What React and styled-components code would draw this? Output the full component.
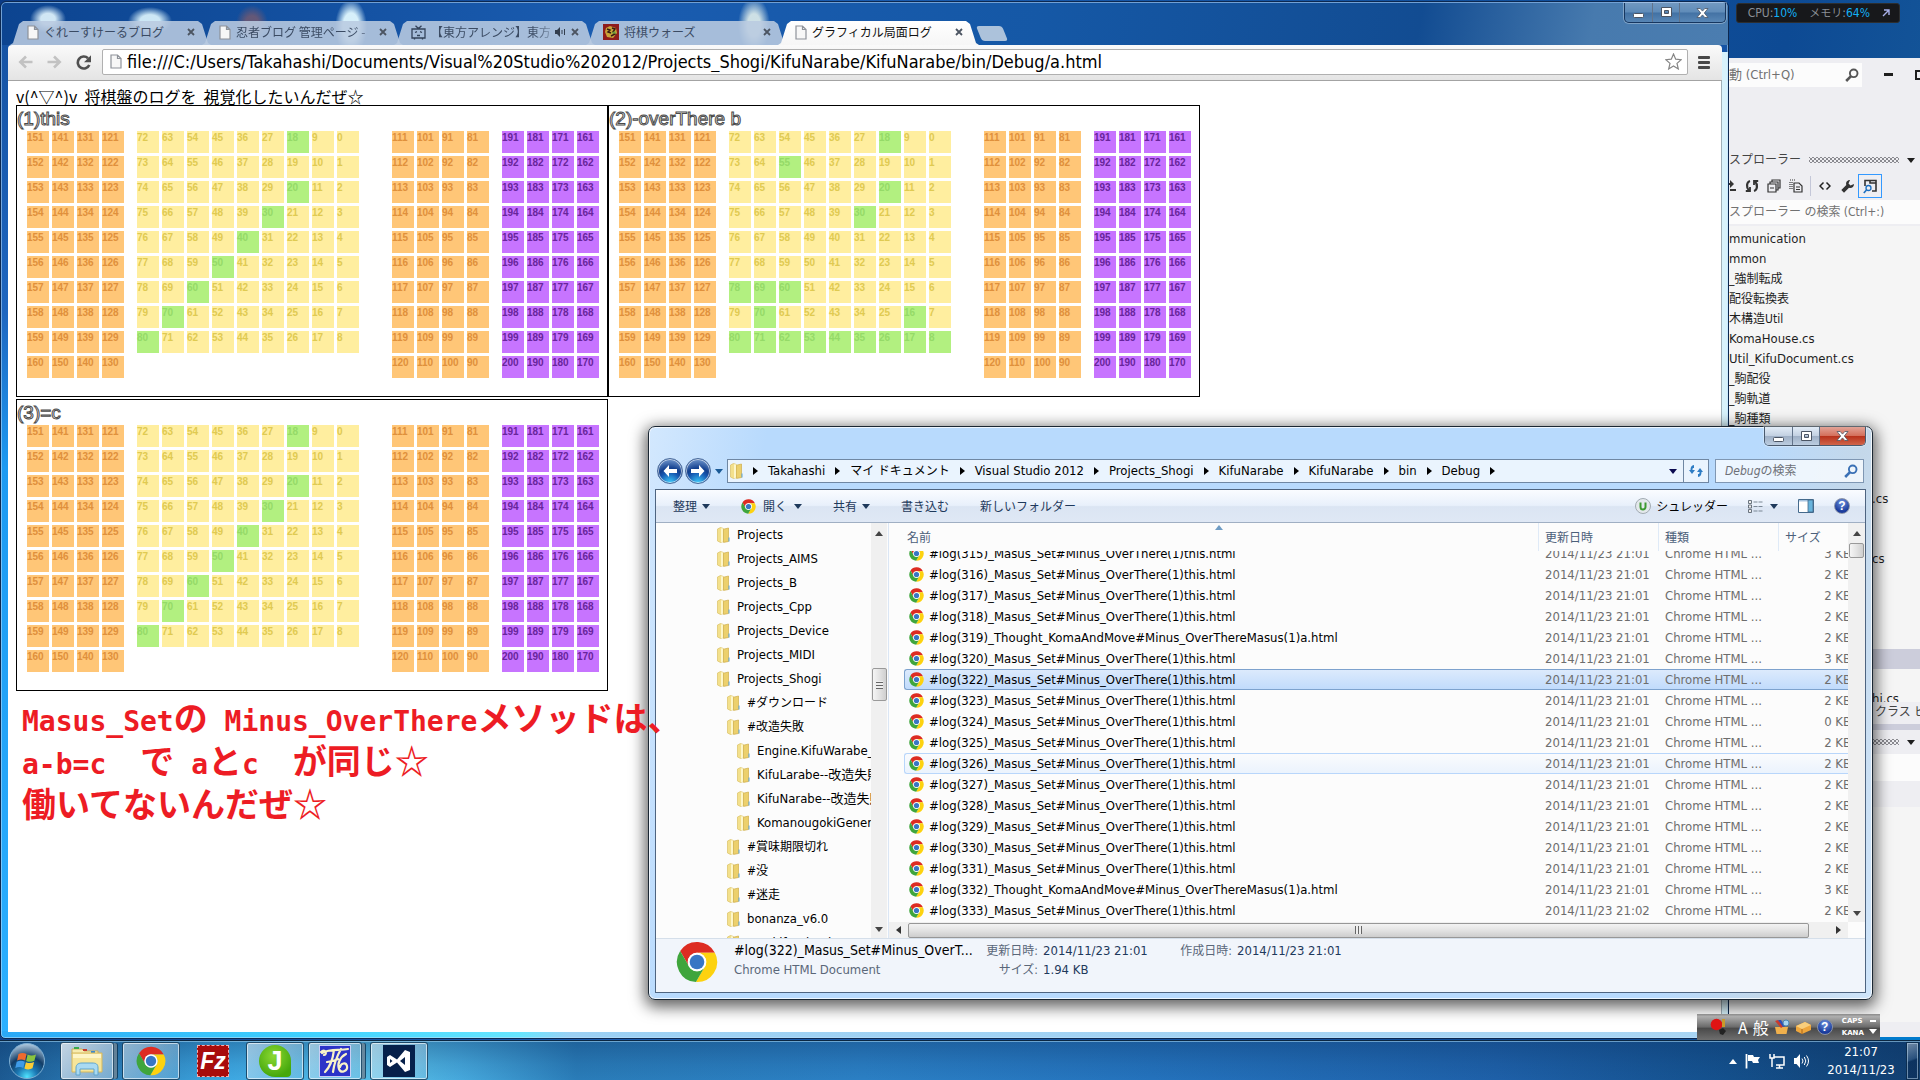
import React, { useEffect, useRef } from "react";
import styled, { createGlobalStyle, css } from "styled-components";

const ui = `"DejaVu Sans Condensed", "Noto Sans CJK JP", sans-serif`;
const jp = `"Noto Sans CJK JP", sans-serif`;

const Global = createGlobalStyle`
  * { box-sizing: border-box; }
  html, body, #root { height: 100%; }
  body { margin: 0; overflow: hidden; font-family: ${ui}; font-size: 13px; line-height: 20px; color: #000; }
  button { border: 0; padding: 0; margin: 0; background: none; font: inherit; color: inherit; }
  input { border: 0; padding: 0; margin: 0; background: none; font: inherit; color: inherit; min-width: 0; outline: 0; }
  svg { display: block; flex: none; }
`;

/* ---------- desktop ---------- */

const Desktop = styled.div`
  position: relative;
  height: 100vh;
  min-height: 720px;
  display: flex;
  flex-direction: column;
  justify-content: flex-end;
  overflow: hidden;
  background: linear-gradient(100deg, #0a3a85 0%, #1a5cb0 40%, #0d4a94 85%, #1a5f9c 100%);
`;

const Gadget = styled.div`
  position: absolute;
  top: 3px;
  right: 20px;
  display: flex;
  align-items: center;
  gap: 12px;
  height: 20px;
  padding: 0 9px 0 11px;
  border-radius: 3px;
  background: #17181b;
  border: 1px solid #2c2e30;
  color: #8a8f96;
  font-size: 12px;
  white-space: nowrap;
  b { color: #12b0f5; font-weight: 400; }
  small { font-size: 11px; }
`;

/* ---------- shared caption buttons ---------- */

const CaptionGroup = styled.div`
  display: flex;
  flex: none;
  align-self: flex-start;
  height: ${(p) => (p.$glass ? 19 : 20)}px;
  border: 1px solid ${(p) => (p.$glass ? "#4a5a6e" : "#16365f")};
  border-top: 0;
  border-radius: 0 0 5px 5px;
  overflow: hidden;
  box-shadow: 0 0 0 1px rgba(255, 255, 255, 0.3);
`;

const CaptionButton = styled.button`
  width: ${(p) => (p.$wide ? 46 : 27)}px;
  display: flex;
  align-items: center;
  justify-content: center;
  background: ${(p) =>
    p.$red
      ? "linear-gradient(#e2a397 0%, #d4705c 48%, #b8321c 52%, #d0654a 100%)"
      : p.$glass
      ? "linear-gradient(#e2ecf7 0%, #c3d1e2 48%, #9fb0c6 52%, #bccde0 100%)"
      : "linear-gradient(rgba(255,255,255,0.22) 0%, rgba(255,255,255,0.12) 48%, rgba(0,20,60,0.1) 52%, rgba(255,255,255,0.08) 100%)"};
  & + & { border-left: 1px solid ${(p) => (p.$glass ? "#62738a" : "#29507f")}; }
`;

function CaptionButtons({ glass }) {
  return (
    <CaptionGroup $glass={glass}>
      <CaptionButton $glass={glass} aria-label="最小化">
        <svg width="13" height="13" viewBox="0 0 13 13"><rect x="1.500" y="7.500" width="10" height="4" rx="1" fill="#fff" stroke="#4b5564" /></svg>
      </CaptionButton>
      <CaptionButton $glass={glass} aria-label="最大化">
        <svg width="13" height="13" viewBox="0 0 13 13"><path d="M1.500 1.500h10v9h-10zM4.500 4.500v3h4v-3z" fill="#fff" fillRule="evenodd" stroke="#4b5564" /></svg>
      </CaptionButton>
      <CaptionButton $glass={glass} $wide $red={glass} aria-label="閉じる">
        <svg width="13" height="12" viewBox="0 0 13 12"><path d="M1 1.500h3.200l2.300 2.600 2.300-2.600H12L8.300 6l3.700 4.500H8.800L6.500 7.900l-2.300 2.600H1L4.700 6z" fill="#fff" stroke="#4b5564" strokeWidth=".8" /></svg>
      </CaptionButton>
    </CaptionGroup>
  );
}

/* ---------- icons ---------- */

const Caret = styled.span`
  flex: none;
  width: 0;
  height: 0;
  border: 4px solid transparent;
  border-width: ${(p) => (p.$dir === "right" ? "4px 0 4px 5px" : p.$dir === "left" ? "4px 5px 4px 0" : p.$dir === "up" ? "0 4px 5px 4px" : "5px 4px 0 4px")};
  ${(p) => css`border-${p.$dir === "right" ? "left" : p.$dir === "left" ? "right" : p.$dir === "up" ? "bottom" : "top"}-color: ${p.$color || "#1e395b"};`}
`;

const ChromeIcon = ({ size = 16 }) => {
  const d = "M43.600 14H24A10 10 0 0 0 15.340 29L5.540 12.030A22 22 0 0 1 43.600 14Z";
  return (
    <svg width={size} height={size} viewBox="1 1 46 46">
      <path d={d} fill="#dd2c22" />
      <path d={d} fill="#fdd20f" transform="rotate(120 24 24)" />
      <path d={d} fill="#3fa53c" transform="rotate(240 24 24)" />
      <circle cx="24" cy="24" r="10.200" fill="#fff" />
      <circle cx="24" cy="24" r="8" fill="#3876c4" />
    </svg>
  );
};

const FolderIcon = () => (
  <svg width="13" height="16" viewBox="0 0 13 16">
    <path d="M0.500 2l3-1.500 3 1v13l-3 1-3-1.500z" fill="#f3e08c" stroke="#dbc266" strokeWidth=".7" />
    <path d="M4 1.200l2.500.3v13l-2.500.8z" fill="#fdf6c9" />
    <path d="M6.500 2.200l5-1.200v13.500l-5 .9z" fill="#ecd06c" stroke="#cfae4b" strokeWidth=".7" />
    <path d="M11.500 10.500h1v4h-1z" fill="#58a3d8" />
  </svg>
);

const PageIcon = () => (
  <svg width="12" height="15" viewBox="0 0 12 15">
    <path d="M1 1h6.500L11 4.500V14H1zM7.500 1v3.500H11" fill="#f7f7f7" stroke="#8e9299" strokeWidth="1.200" />
  </svg>
);

const TvIcon = () => (
  <svg width="15" height="15" viewBox="0 0 15 15" fill="none" stroke="#33435a" strokeWidth="1.300">
    <path d="M4.500.7l3 2.800 3-2.800M1 4h13v9H1zM3.500 13v1.500M11.500 13v1.500M4 7.500l2-.8M11 7.500l-2-.8M6 10.500h3" />
  </svg>
);

const GameIcon = () => (
  <svg width="16" height="16" viewBox="0 0 16 16">
    <rect width="16" height="16" fill="#8f1c1c" />
    <path d="M3 4l4-2 6 2 1 5-4 5-6-1-2-5z" fill="#caa53a" />
    <path d="M4 5l3 1-2 2 3 1M9 4l3 1-2 3 2 2-4 2" stroke="#3a1b12" strokeWidth="1.500" fill="none" />
    <path d="M8 9l4-2 1 3z" fill="#6a9c3a" />
  </svg>
);

const SearchIcon = ({ color }) => (
  <svg width="14" height="14" viewBox="0 0 14 14" fill="none" stroke={color}>
    <circle cx="8.700" cy="5.300" r="3.800" strokeWidth="1.900" />
    <path d="M6 8.200L1.200 13" strokeWidth="2.600" />
  </svg>
);

const HelpIcon = styled.span`
  flex: none;
  width: 16px;
  height: 16px;
  border-radius: 50%;
  background: radial-gradient(circle at 50% 25%, #6f93e0, #1b3c9c 70%);
  border: 1px solid #8a93a8;
  color: #fff;
  font: bold 12px/14px "Liberation Sans", sans-serif;
  text-align: center;
`;

/* ---------- Chrome window ---------- */

const BrowserWindow = styled.section`
  position: absolute;
  inset: 1px 191px 41px 0;
  display: flex;
  flex-direction: column;
  padding: 0 6px 6px 7px;
  border: 1px solid #0c2850;
  border-radius: 6px 6px 5px 5px;
  background:
    linear-gradient(90deg, transparent calc(100% - 7px), #d8f2fb calc(100% - 6px)) 0 50px / 100% 100% no-repeat,
    linear-gradient(90deg, #2aa8f6 0%, #3fd2ff 18%, #66e6ff 30%, #9bd0f4 33%, #a9d5f3 100%) 0 100% / 100% 7px no-repeat,
    linear-gradient(#1450a0 0%, #1e66c0 30%, #1d9af2 45%, #2cb0ff 100%);
  box-shadow: inset 0 0 0 1px rgba(190, 225, 255, 0.55);
`;

const TitleBar = styled.header`
  display: flex;
  align-items: flex-end;
  height: 42px;
  flex: none;
  margin: 1px -6px 0 -6px;
  padding: 0 2px 0 8px;
  border-radius: 5px 5px 0 0;
  background:
    radial-gradient(ellipse 18px 14px at 46px 16px, rgba(230, 248, 255, 0.9) 40%, transparent),
    radial-gradient(ellipse 22px 14px at 148px 18px, rgba(225, 248, 255, 0.9) 45%, transparent),
    radial-gradient(ellipse 16px 18px at 250px 20px, rgba(120, 90, 110, 0.8) 40%, transparent),
    radial-gradient(ellipse 16px 28px at 349px 24px, rgba(225, 248, 255, 0.95) 50%, transparent),
    radial-gradient(ellipse 16px 28px at 752px 22px, rgba(225, 238, 235, 0.9) 40%, transparent),
    linear-gradient(100deg, #0c4490 0%, #1a5cb0 35%, #1558a6 60%, #124c92 82%, #477aae 92%, #4b7db0 100%);
`;

const Tabs = styled.nav`
  display: flex;
  flex: 0 1 965px;
  min-width: 0;
`;

const Tab = styled.a`
  position: relative;
  flex: 0 1 201px;
  min-width: 0;
  height: 24px;
  margin-right: -9px;
  padding: 0 16px 2px 17px;
  display: flex;
  align-items: center;
  gap: 5px;
  font: 12px/20px ${jp};
  color: ${(p) => (p.$active ? "#111" : "#3b4b63")};
  text-decoration: none;
  white-space: nowrap;
  z-index: ${(p) => (p.$active ? 1 : 0)};
  &::before {
    content: "";
    position: absolute;
    inset: 0;
    z-index: -1;
    background: ${(p) => (p.$active ? "linear-gradient(#fff, #f6f6f6)" : "rgba(186, 203, 224, 0.88)")};
    clip-path: polygon(0 100%, 3px 92%, 9px 12%, 13px 0, calc(100% - 13px) 0, calc(100% - 9px) 12%, calc(100% - 3px) 92%, 100% 100%);
  }
`;

const TabTitle = styled.span`
  flex: 1;
  min-width: 0;
  overflow: hidden;
  ${(p) => p.$fade && css`mask-image: linear-gradient(90deg, #000 85%, rgba(0, 0, 0, 0.4));`}
`;

const NewTab = styled.button`
  width: 26px;
  height: 15px;
  margin: 0 0 4px 4px;
  background: rgba(186, 203, 224, 0.92);
  border-radius: 3px;
  transform: skewX(22deg);
`;

const CaptionSlot = styled.div`
  display: flex;
  align-self: flex-start;
  margin-left: auto;
`;

const BrowserToolbar = styled.div`
  display: flex;
  align-items: center;
  height: 36px;
  flex: none;
  padding: 0 12px 1px 10px;
  gap: 14px;
  border-radius: 4px 4px 0 0;
  border-bottom: 1px solid #a3a3a3;
  background: linear-gradient(#fafafa, #e4e4e4);
`;

const IconButton = styled.button`
  flex: none;
  display: flex;
`;

const Omnibox = styled.label`
  flex: 1;
  display: flex;
  align-items: center;
  gap: 5px;
  height: 26px;
  margin-left: -4px;
  margin-right: -4px;
  padding: 0 5px 1px 7px;
  background: #fff;
  border: 1px solid #b0b0b0;
  border-radius: 2px;
  input { flex: 1; font-size: 18px; height: 22px; }
`;

const Page = styled.main`
  flex: 1;
  min-height: 0;
  overflow: hidden;
  background: #fff;
  padding: 4px 8px;
  border-right: 1px solid #9fb0b8;
`;

const PageIntro = styled.p`
  margin: 0;
  height: 20px;
  font: 16px/22px ${jp};
  white-space: pre;
`;

const BoardList = styled.div`
  display: flex;
  flex-wrap: wrap;
  row-gap: 2px;
`;

const Board = styled.section`
  width: 592px;
  height: 292px;
  border: 1px solid #000;
`;

const BoardTitle = styled.h2`
  margin: 0;
  height: 25px;
  font: 400 19px/26px "Liberation Sans", sans-serif;
  color: #fff;
  -webkit-text-stroke: 1px #4a4a4a;
`;

const Stands = styled.div`
  display: flex;
  align-items: flex-start;
  gap: 13px;
  padding-left: 10px;
`;

const Stand = styled.div`
  display: grid;
  grid-template-columns: repeat(${(p) => p.$cols}, 22px);
  grid-auto-rows: 22px;
  gap: 3px;
  margin-left: ${(p) => p.$push || 0}px;
`;

const cellTone = {
  orange: ["#ffc677", "#e0903c"],
  yellow: ["#ffee9f", "#dfca52"],
  green: ["#b2f080", "#95da68"],
  purple: ["#c774ff", "#67259b"],
};

const Cell = styled.span`
  font: bold 10px/14px "Liberation Sans", sans-serif;
  background: ${(p) => cellTone[p.$tone][0]};
  color: ${(p) => cellTone[p.$tone][1]};
`;

const stands = [
  { tone: "orange", starts: [151, 141, 131, 121], rows: 10 },
  { tone: "yellow", starts: [72, 63, 54, 45, 36, 27, 18, 9, 0], rows: 9 },
  { tone: "orange", starts: [111, 101, 91, 81], rows: 10, push: 20 },
  { tone: "purple", starts: [191, 181, 171, 161], rows: 10 },
];

const diagonal = [18, 20, 30, 40, 50, 60, 70, 80];
const boards = [
  { title: "(1)this", marked: diagonal },
  { title: "(2)-overThere b", marked: [18, 55, 20, 30, 78, 69, 60, 70, 16, 80, 71, 62, 53, 44, 35, 26, 17, 8] },
  { title: "(3)=c", marked: diagonal },
];

function MasuBoard({ title, marked }) {
  return (
    <Board>
      <BoardTitle>{title}</BoardTitle>
      <Stands>
        {stands.map((s, i) => (
          <Stand key={i} $cols={s.starts.length} $push={s.push}>
            {Array.from({ length: s.rows }, (_, r) =>
              s.starts.map((n) => (
                <Cell key={n + r} $tone={marked.includes(n + r) ? "green" : s.tone}>{n + r}</Cell>
              ))
            )}
          </Stand>
        ))}
      </Stands>
    </Board>
  );
}

const tabs = [
  { icon: <PageIcon />, title: "ぐれーすけーるブログ" },
  { icon: <PageIcon />, title: "忍者ブログ 管理ページ -", fade: true },
  { icon: <TvIcon />, title: "【東方アレンジ】東方", fade: true, audio: true },
  { icon: <GameIcon />, title: "将棋ウォーズ" },
  { icon: <PageIcon />, title: "グラフィカル局面ログ", active: true },
];

const CloseGlyph = () => (
  <svg width="8" height="8" viewBox="0 0 8 8"><path d="M1 1l6 6M7 1L1 7" stroke="#4c5562" strokeWidth="1.800" /></svg>
);

function Browser() {
  return (
    <BrowserWindow>
      <TitleBar>
        <Tabs>
          {tabs.map((t) => (
            <Tab key={t.title} href="#" $active={t.active}>
              {t.icon}
              <TabTitle $fade={t.fade}>{t.title}</TabTitle>
              {t.audio && (
                <svg width="11" height="10" viewBox="0 0 11 10"><path d="M0 3h2l3-3v10L2 7H0z" fill="#333e4e" /><path d="M7 3v4M9.500 2v6" stroke="#333e4e" /></svg>
              )}
              <IconButton aria-label="タブを閉じる"><CloseGlyph /></IconButton>
            </Tab>
          ))}
        </Tabs>
        <NewTab aria-label="新しいタブ" />
        <CaptionSlot><CaptionButtons /></CaptionSlot>
      </TitleBar>
      <BrowserToolbar>
        <IconButton aria-label="戻る">
          <svg width="15" height="14" viewBox="0 0 15 14" fill="none" stroke="#c2c2c2" strokeWidth="2.600"><path d="M14.500 7H2.500M8 1.500L2.300 7 8 12.500" /></svg>
        </IconButton>
        <IconButton aria-label="進む">
          <svg width="15" height="14" viewBox="0 0 15 14" fill="none" stroke="#c2c2c2" strokeWidth="2.600"><path d="M.5 7h12M7 1.500L12.700 7 7 12.500" /></svg>
        </IconButton>
        <IconButton aria-label="再読み込み">
          <svg width="16" height="15" viewBox="0 0 16 15"><path d="M13.300 10A6 6 0 1 1 12 3.200" fill="none" stroke="#505050" strokeWidth="2.600" /><path d="M15 .3v7H8z" fill="#505050" /></svg>
        </IconButton>
        <Omnibox>
          <PageIcon />
          <input aria-label="アドレス" defaultValue="file:///C:/Users/Takahashi/Documents/Visual%20Studio%202012/Projects_Shogi/KifuNarabe/KifuNarabe/bin/Debug/a.html" />
          <svg width="17" height="17" viewBox="0 0 17 17"><path d="M8.500 1l2.200 5.200 5.500.5-4.200 3.700 1.300 5.500-4.800-3-4.800 3L5 10.400.8 6.700l5.500-.5z" fill="#fff" stroke="#858585" strokeWidth="1.200" /></svg>
        </Omnibox>
        <IconButton aria-label="メニュー">
          <svg width="12" height="13" viewBox="0 0 12 13" fill="#474747"><rect width="12" height="3" rx="1" /><rect y="5" width="12" height="3" rx="1" /><rect y="10" width="12" height="3" rx="1" /></svg>
        </IconButton>
      </BrowserToolbar>
      <Page>
        <PageIntro>{"v(^▽^)v  将棋盤のログを  視覚化したいんだぜ☆"}</PageIntro>
        <BoardList>{boards.map((b) => <MasuBoard key={b.title} {...b} />)}</BoardList>
      </Page>
    </BrowserWindow>
  );
}

/* ---------- Visual Studio window ---------- */

const StudioWindow = styled.aside`
  position: absolute;
  inset: 58px 0 40px auto;
  width: 191px;
  display: flex;
  flex-direction: column;
  overflow: hidden;
  background: #eeeef2;
  border-bottom: 3px solid #007acc;
  color: #1e1e1e;
  white-space: nowrap;
`;

const StudioTop = styled.div`
  display: flex;
  align-items: center;
  height: 34px;
  margin-bottom: 56px;
  gap: 22px;
`;

const QuickLaunch = styled.label`
  display: flex;
  align-items: center;
  flex: 0 0 133px;
  height: 24px;
  padding-right: 3px;
  background: #fcfcfc;
  input { flex: 1; width: 100%; }
  input::placeholder { color: #717171; opacity: 1; }
`;

const PaneHeader = styled.div`
  display: flex;
  align-items: center;
  gap: 8px;
  height: 24px;
  padding: 0 5px 0 0;
  font-size: 12px;
  color: #444;
  flex: none;
`;

const Grip = styled.span`
  flex: 1;
  height: 6px;
  background:
    radial-gradient(circle, #8a8a90 0.8px, transparent 1.1px) 0 0 / 4px 4px,
    radial-gradient(circle, #8a8a90 0.8px, transparent 1.1px) 2px 2px / 4px 4px;
`;

const StudioTools = styled.div`
  display: flex;
  align-items: center;
  gap: 6px;
  height: 28px;
  flex: none;
  color: #333;
`;

const ToolCell = styled.button`
  width: ${(p) => (p.$clipped ? 9 : 16)}px;
  height: 20px;
  flex: none;
  display: flex;
  align-items: center;
  justify-content: ${(p) => (p.$clipped ? "flex-end" : "center")};
  overflow: hidden;
  ${(p) => p.$on && css`width: 24px; height: 24px; margin-left: -3px; border: 1px solid #3399ff;`}
`;

const ToolDivider = styled.span`
  width: 1px;
  height: 20px;
  background: #c4c7d8;
`;

const StudioSearch = styled.input`
  height: 24px;
  flex: none;
  width: 100%;
  background: #fcfcfc;
  font-size: 12px;
  &::placeholder { color: #717171; opacity: 1; }
`;

const SolutionTree = styled.ul`
  list-style: none;
  margin: 2px 0 0;
  padding: 3px 0 0;
  height: 476px;
  overflow: hidden;
  flex: none;
  background: #f5f5f5;
`;

const SolutionItem = styled.li`
  height: 20px;
  padding-left: ${(p) => (p.$deep ? 143 : 0)}px;
  background: ${(p) => (p.$on ? "#cccddb" : "transparent")};
  font-size: ${(p) => (p.$kana ? 12 : 13)}px;
`;

const StudioTabs = styled.div`
  height: 22px;
  flex: none;
  padding-left: 146px;
  font-size: 12px;
  color: #444;
`;

const Band = styled.div`
  height: ${(p) => p.$h}px;
  flex: ${(p) => (p.$grow ? 1 : "none")};
  background: ${(p) => p.$bg};
`;

const solution = [
  ["mmunication"], ["mmon"], ["_強制転成", 1], ["配役転換表", 1], ["木構造Util", 1], ["KomaHouse.cs"],
  ["Util_KifuDocument.cs"], ["_駒配役", 1], ["_駒軌道", 1], ["_駒種類", 1], [""], [""], [""],
  [".cs", 0, 1], [""], [""], ["cs", 0, 1], [""], [""], [""], [""], ["", 0, 0, 1], [""], ["hi.cs", 0, 1],
];

function Studio() {
  return (
    <StudioWindow>
      <StudioTop>
        <QuickLaunch>
          <input aria-label="クイック起動" placeholder="動 (Ctrl+Q)" />
          <SearchIcon color="#555" />
        </QuickLaunch>
        <svg width="9" height="4" viewBox="0 0 9 4"><rect width="9" height="3" fill="#1e1e1e" /></svg>
        <svg width="14" height="10" viewBox="0 0 14 10"><path d="M1 9V1h12v8z" fill="none" stroke="#1e1e1e" strokeWidth="2" /></svg>
      </StudioTop>
      <PaneHeader>スプローラー<Grip /><Caret $color="#1e1e1e" /></PaneHeader>
      <StudioTools>
        <ToolCell $clipped aria-label="同期"><svg width="14" height="14" viewBox="0 0 14 14"><path d="M0 4h6V1l4 4-4 4V6H0zM6 10h6v2H6z" fill="#333" /></svg></ToolCell>
        <ToolCell aria-label="更新"><svg width="14" height="14" viewBox="0 0 14 14" fill="none" stroke="#333" strokeWidth="2.200"><path d="M5 2C1.500 3 1 8.500 4 11.500M9 12c3.500-1 4-6.500 1-9.500" /><path d="M.8 12H5V8M13.200 2H9v4" strokeWidth="1.800" /></svg></ToolCell>
        <ToolCell aria-label="折りたたむ"><svg width="14" height="14" viewBox="0 0 14 14" fill="none" stroke="#333" strokeWidth="1.200"><path d="M1 5h8v8H1zM3 9h4M3 5V3h8v8H9M5 3V1h8v8h-2" /></svg></ToolCell>
        <ToolCell aria-label="すべて表示"><svg width="14" height="14" viewBox="0 0 14 14" fill="none" stroke="#333" strokeWidth="1.200"><path d="M5 4h5l3 3v6H5zM7 8h4M7 10.500h4" /><path d="M1 1h6M1 3v7M3 3v8" strokeDasharray="1 1" /></svg></ToolCell>
        <ToolDivider />
        <ToolCell aria-label="コード"><svg width="12" height="10" viewBox="0 0 12 10" fill="none" stroke="#222" strokeWidth="1.500"><path d="M4.500 1.500L1 5l3.500 3.500M7.500 1.500L11 5 7.500 8.500" /></svg></ToolCell>
        <ToolCell aria-label="プロパティ"><svg width="13" height="13" viewBox="0 0 13 13"><path d="M9 0L7.500 3.500 9.500 5.500 13 4c0 3-2.500 4.500-5 3.700L3 12.700.3 10l5-5C4.500 2.500 6 0 9 0z" fill="#333" /></svg></ToolCell>
        <ToolCell $on aria-label="プレビュー"><svg width="15" height="15" viewBox="0 0 15 15" fill="none"><path d="M2 7V1.500h5V4h6v8H9M7 1.500h6V4" stroke="#333" strokeWidth="1.600" /><circle cx="5.500" cy="9" r="2.500" stroke="#1c6fc0" strokeWidth="1.300" /><path d="M3.500 11L.8 14" stroke="#1c6fc0" strokeWidth="1.600" /></svg></ToolCell>
      </StudioTools>
      <StudioSearch aria-label="ソリューション検索" placeholder="スプローラー の検索 (Ctrl+:)" />
      <SolutionTree>
        {solution.map(([name, kana, deep, on], i) => (
          <SolutionItem key={i} $kana={kana} $deep={deep} $on={on}>{name}</SolutionItem>
        ))}
      </SolutionTree>
      <StudioTabs>クラス ビュー</StudioTabs>
      <Band $h={6} $bg="#cccddb" />
      <PaneHeader><Grip /><Caret $color="#1e1e1e" /></PaneHeader>
      <Band $h={27} $bg="#fcfcfc" />
      <Band $h={26} $bg="#eeeef2" />
      <Band $grow $bg="#f5f5f5" />
      <Band $h={15} $bg="#eeeef2" />
    </StudioWindow>
  );
}

/* ---------- Explorer window ---------- */

const ExplorerWindow = styled.section`
  position: absolute;
  top: 426px;
  right: 47px;
  width: 1225px;
  height: 574px;
  display: flex;
  flex-direction: column;
  padding: 0 6px 6px;
  border: 1px solid #1b2733;
  border-radius: 7px;
  background: linear-gradient(100deg, #d3e8fe 0%, #b8dafd 9%, #b8dafd 84%, #c4d8ea 92%, #cfe5fb 100%);
  box-shadow: inset 0 0 0 1px rgba(255, 255, 255, 0.75), 0 4px 15px 3px rgba(0, 0, 0, 0.62);
`;

const ExplorerTitle = styled.header`
  height: 26px;
  flex: none;
  display: flex;
  justify-content: flex-end;
`;

const NavRow = styled.div`
  height: 36px;
  flex: none;
  display: flex;
  align-items: center;
  gap: 2px;
  padding: 0 2px;
`;

const NavButton = styled.button`
  flex: none;
  width: 26px;
  height: 26px;
  display: flex;
  align-items: center;
  justify-content: center;
  border-radius: 50%;
  border: 1px solid #4a6a9a;
  box-shadow: inset 0 0 0 1px rgba(255, 255, 255, 0.6);
  background: radial-gradient(circle at 50% 100%, #3fd0ff 0%, #1657b0 40%, #123f8e 55%, #8fb2e0 100%);
`;

const CaretButton = styled.button`
  flex: none;
  width: 12px;
  display: flex;
  justify-content: center;
`;

const AddressBar = styled.div`
  flex: 1;
  min-width: 0;
  height: 24px;
  margin-right: 4px;
  display: flex;
  align-items: center;
  padding-left: 2px;
  border: 1px solid #6f87a3;
  background: #eaf4fe;
  overflow: hidden;
`;

const Crumb = styled.button`
  display: flex;
  align-items: center;
  flex: none;
  font-size: ${(p) => (p.$kana ? 12 : 13)}px;
`;

const CrumbArrow = styled.span`
  width: 25px;
  display: flex;
  justify-content: center;
`;

const AddressEnd = styled.div`
  margin-left: auto;
  flex: none;
  height: 100%;
  display: flex;
  align-items: center;
  gap: 6px;
`;

const Refresh = styled.button`
  height: 100%;
  width: 25px;
  display: flex;
  align-items: center;
  justify-content: center;
  border-left: 1px solid #6f87a3;
`;

const SearchBox = styled.label`
  flex: 0 0 149px;
  height: 24px;
  display: flex;
  align-items: center;
  padding: 0 5px 0 9px;
  border: 1px solid #7f97b3;
  background: rgba(250, 252, 255, 0.8);
  input { flex: 1; width: 100%; }
  input::placeholder { color: #6d7178; opacity: 1; font-style: italic; font-size: 12px; font-synthesis: none; }
`;

const Client = styled.div`
  flex: 1;
  min-height: 0;
  display: flex;
  flex-direction: column;
  border: 1px solid #4e6480;
  background: #fcfcfc;
`;

const CommandBar = styled.div`
  height: 33px;
  flex: none;
  display: flex;
  align-items: center;
  gap: 31px;
  padding: 0 15px 0 17px;
  border-bottom: 1px solid #a0afc3;
  background: linear-gradient(#fafcff 0%, #e8f0fb 48%, #dbe5f3 52%, #dfe8f5 100%);
  color: #1e395b;
`;

const Command = styled.button`
  display: flex;
  align-items: center;
  gap: ${(p) => p.$gap || 5}px;
  font: 12px/20px ${jp};
  white-space: nowrap;
`;

const CommandEnd = styled.div`
  margin-left: auto;
  display: flex;
  align-items: center;
  gap: 20px;
  color: #000;
`;

const Panes = styled.div`
  flex: 1;
  min-height: 0;
  display: grid;
  grid-template-columns: 215px 16px 2px minmax(0, 1fr) 17px;
  grid-template-rows: minmax(0, 1fr);
`;

const FolderTree = styled.ul`
  list-style: none;
  margin: 0;
  padding: 0;
  overflow: hidden;
`;

const FolderItem = styled.li`
  height: 24px;
  display: flex;
  align-items: center;
  gap: 7px;
  padding-left: ${(p) => 61 + p.$level * 10}px;
  font-size: ${(p) => (p.$kana ? 12 : 13)}px;
  white-space: nowrap;
`;

const VScroll = styled.div`
  display: flex;
  flex-direction: column;
  align-items: center;
  justify-content: space-between;
  padding: 8px 0 6px;
  background: #f0f0f0;
  margin-bottom: ${(p) => p.$gapBottom || 0}px;
`;

const Thumb = styled.span`
  width: 15px;
  height: ${(p) => p.$h}px;
  margin: ${(p) => (p.$top ? `${p.$top}px 0 auto` : "0")};
  display: flex;
  align-items: center;
  justify-content: center;
  border: 1px solid #999;
  border-radius: 2px;
  background: linear-gradient(90deg, #f5f5f5, #e3e3e3 50%, #cfcfcf);
`;

const Splitter = styled.span`
  border-right: 1px solid #dbe6f4;
`;

const ListColumn = styled.div`
  display: flex;
  flex-direction: column;
  min-width: 0;
`;

const ListView = styled.div`
  flex: 1;
  min-height: 0;
  overflow: hidden;
  padding: 0 0 10px 15px;
`;

const FileTable = styled.table`
  width: calc(100% + 11px);
  table-layout: fixed;
  border-collapse: separate;
  border-spacing: 0;
  white-space: nowrap;
`;

const HeadCell = styled.th`
  position: sticky;
  top: 0;
  z-index: 1;
  width: ${(p) => p.$w || "auto"};
  height: 28px;
  padding: 0 0 0 ${(p) => (p.$first ? 3 : 6)}px;
  background: #fcfcfc;
  border-left: ${(p) => (p.$first ? 0 : 1)}px solid #dfeaf7;
  font: 400 12px/20px ${jp};
  color: #4c607a;
  text-align: left;
`;

const SortMark = styled.span`
  position: absolute;
  top: 2px;
  left: 311px;
  display: flex;
`;

const FileRow = styled.tr`
  td {
    height: 21px;
    padding: 0 0 0 7px;
    line-height: 19px;
    color: #6d6d6d;
    border: solid transparent;
    border-width: 1px 0;
    ${(p) => p.$state === "selected" && css`background: linear-gradient(#dceafc, #c1dbfc); border-color: #7da2ce;`}
    ${(p) => p.$state === "hover" && css`background: linear-gradient(#fafbfd, #ebf3fd); border-color: #b8d6fb;`}
  }
  td:first-child {
    padding-left: 4px;
    color: #000;
    border-left-width: 1px;
    border-radius: 3px 0 0 3px;
  }
  td:last-child { text-align: right; padding-right: 8px; }
`;

const FileName = styled.span`
  display: flex;
  align-items: center;
  gap: 5px;
`;

const HScroll = styled.div`
  height: 16px;
  flex: none;
  display: flex;
  align-items: center;
  background: #f0f0f0;
  padding: 0 7px;
`;

const HThumb = styled.span`
  flex: 1;
  height: 15px;
  margin: 0 27px 0 7px;
  display: flex;
  align-items: center;
  justify-content: center;
  border: 1px solid #979797;
  border-radius: 2px;
  background: linear-gradient(#f3f3f3, #e2e2e2 50%, #cdcdcd);
`;

const GripLines = styled.span`
  width: 7px;
  height: 8px;
  background: repeating-linear-gradient(${(p) => (p.$v ? 0 : 90)}deg, #666 0 1px, #eee 1px 3px);
`;

const DetailsPane = styled.footer`
  height: 54px;
  flex: none;
  display: flex;
  padding: 2px 0 0 20px;
  border-top: 1px solid #d5dfea;
  background: #f1f5fb;
`;

const DetailText = styled.div`
  flex: 0 0 252px;
  margin-left: 16px;
  line-height: 19px;
  white-space: nowrap;
  color: #5a6779;
  strong { display: block; font-weight: 400; font-size: 14px; color: #000; }
`;

const DetailGrid = styled.dl`
  margin: 0;
  display: grid;
  grid-template-columns: 52px 132px 52px auto;
  grid-auto-rows: 19px;
  column-gap: 5px;
  line-height: 20px;
  dt { font-size: 12px; color: #5a6779; text-align: right; white-space: nowrap; }
  dd { margin: 0; color: #1e395b; white-space: nowrap; }
`;

const folders = [
  [0, "Projects"], [0, "Projects_AIMS"], [0, "Projects_B"], [0, "Projects_Cpp"], [0, "Projects_Device"],
  [0, "Projects_MIDI"], [0, "Projects_Shogi"], [1, "#ダウンロード", 1], [1, "#改造失敗", 1],
  [2, "Engine.KifuWarabe_"], [2, "KifuLarabe--改造失敗"], [2, "KifuNarabe--改造失敗"], [2, "KomanougokiGener"],
  [1, "#賞味期限切れ", 1], [1, "#没", 1], [1, "#迷走", 1], [1, "bonanza_v6.0"], [1, "csa_kifu_shogi"],
];

const plain = (n) => `#log(${n})_Masus_Set#Minus_OverThere(1)this.html`;
const thought = (n) => `#log(${n})_Thought_KomaAndMove#Minus_OverThereMasus(1)a.html`;
const files = [
  [plain(315), 3], [plain(316), 2], [plain(317), 2], [plain(318), 2], [thought(319), 2], [plain(320), 3],
  [plain(322), 2, "selected"], [plain(323), 2], [plain(324), 0], [plain(325), 2], [plain(326), 2, "hover"],
  [plain(327), 2], [plain(328), 2], [plain(329), 2], [plain(330), 2], [plain(331), 2], [thought(332), 3], [plain(333), 2],
];
const crumbs = ["Takahashi", "マイ ドキュメント", "Visual Studio 2012", "Projects_Shogi", "KifuNarabe", "KifuNarabe", "bin", "Debug"];

function Explorer() {
  const view = useRef(null);
  useEffect(() => { view.current.scrollTop = 8; }, []);
  return (
    <ExplorerWindow>
      <ExplorerTitle><CaptionButtons glass /></ExplorerTitle>
      <NavRow>
        <NavButton aria-label="戻る"><svg width="16" height="14" viewBox="0 0 16 14"><path d="M7 1L1.500 7 7 13V9h8V5H7z" fill="#fff" /></svg></NavButton>
        <NavButton aria-label="進む"><svg width="16" height="14" viewBox="0 0 16 14"><path d="M9 1l5.500 6L9 13V9H1V5h8z" fill="#fff" /></svg></NavButton>
        <CaretButton aria-label="履歴"><Caret $color="#1a5a96" /></CaretButton>
        <AddressBar>
          <FolderIcon />
          {crumbs.map((c, i) => (
            <Crumb key={i} $kana={i === 1}><CrumbArrow><Caret $dir="right" $color="#000" /></CrumbArrow>{c}</Crumb>
          ))}
          <CrumbArrow><Caret $dir="right" $color="#000" /></CrumbArrow>
          <AddressEnd>
            <Caret $color="#0a0a50" />
            <Refresh aria-label="最新の情報に更新">
              <svg width="14" height="14" viewBox="0 0 14 14"><path d="M5 1v3h-.5C3.500 4 3.500 5 3.500 5.500V6H6L3 10 0 6h1.500C1.500 3 2.500 1.500 5 1z" fill="#2d7cc4" /><path d="M9 13v-3h.5c1 0 1-1 1-1.500V8H8l3-4 3 4h-1.500c0 3-1 4.500-3.500 5z" fill="#2d7cc4" /></svg>
            </Refresh>
          </AddressEnd>
        </AddressBar>
        <SearchBox><input aria-label="Debugの検索" placeholder="Debugの検索" /><SearchIcon color="#3a70b5" /></SearchBox>
      </NavRow>
      <Client>
        <CommandBar>
          <Command>整理<Caret /></Command>
          <Command $gap={7}><ChromeIcon size={15} />開く<Caret /></Command>
          <Command>共有<Caret /></Command>
          <Command>書き込む</Command>
          <Command>新しいフォルダー</Command>
          <CommandEnd>
            <Command>
              <svg width="16" height="16" viewBox="0 0 16 16"><circle cx="8" cy="8" r="7.500" fill="#e4e9ec" stroke="#a2abb2" /><path d="M5.500 4.500V9a2.500 2.500 0 0 0 5 0V4.500" fill="none" stroke="#3d9a30" strokeWidth="2" /></svg>
              シュレッダー
            </Command>
            <Command $gap={7} aria-label="表示方法">
              <svg width="15" height="13" viewBox="0 0 15 13"><path d="M.5.500h3v3h-3zM.5 5h3v3h-3zM.5 9.500h3v3h-3z" fill="#eee" stroke="#5c6672" strokeWidth=".9" /><path d="M5.500 2H15M5.500 6.500H15M5.500 11H15" stroke="#7a8794" strokeDasharray="4 1" /></svg>
              <Caret />
            </Command>
            <IconButton aria-label="プレビュー"><svg width="16" height="14" viewBox="0 0 16 14"><path d="M.5.500h15v13H.5z" fill="#fff" stroke="#456a8c" /><path d="M1 1h14v1.500H1z" fill="#a9c5e0" /><path d="M10 1h5v12h-5z" fill="#67b3dc" stroke="#456a8c" strokeWidth=".8" /></svg></IconButton>
            <HelpIcon>?</HelpIcon>
          </CommandEnd>
        </CommandBar>
        <Panes>
          <FolderTree>
            {folders.map(([level, name, kana]) => (
              <FolderItem key={name} $level={level} $kana={kana}><FolderIcon />{name}</FolderItem>
            ))}
          </FolderTree>
          <VScroll>
            <Caret $dir="up" $color="#444" />
            <Thumb $h={33} $top={132}><GripLines $v /></Thumb>
            <Caret $color="#444" />
          </VScroll>
          <Splitter />
          <ListColumn>
            <ListView ref={view}>
              <FileTable>
                <thead>
                  <tr>
                    <HeadCell $first>名前<SortMark><Caret $dir="up" $color="#6f9cc4" /></SortMark></HeadCell>
                    <HeadCell $w="120px">更新日時</HeadCell>
                    <HeadCell $w="120px">種類</HeadCell>
                    <HeadCell $w="81px">サイズ</HeadCell>
                  </tr>
                </thead>
                <tbody>
                  {files.map(([name, kb, state]) => (
                    <FileRow key={name} $state={state}>
                      <td><FileName><ChromeIcon size={15} />{name}</FileName></td>
                      <td>{name.includes("(333)") ? "2014/11/23 21:02" : "2014/11/23 21:01"}</td>
                      <td>Chrome HTML ...</td>
                      <td>{kb} KB</td>
                    </FileRow>
                  ))}
                </tbody>
              </FileTable>
            </ListView>
            <HScroll><Caret $dir="left" $color="#333" /><HThumb><GripLines /></HThumb><Caret $dir="right" $color="#333" /></HScroll>
          </ListColumn>
          <VScroll $gapBottom={16}>
            <Caret $dir="up" $color="#444" />
            <Thumb $h={15} $top={7} />
            <Caret $color="#444" />
          </VScroll>
        </Panes>
        <DetailsPane>
          <ChromeIcon size={42} />
          <DetailText><strong>#log(322)_Masus_Set#Minus_OverT...</strong>Chrome HTML Document</DetailText>
          <DetailGrid>
            <dt>更新日時:</dt><dd>2014/11/23 21:01</dd>
            <dt>作成日時:</dt><dd>2014/11/23 21:01</dd>
            <dt>サイズ:</dt><dd>1.94 KB</dd>
          </DetailGrid>
        </DetailsPane>
      </Client>
    </ExplorerWindow>
  );
}

/* ---------- annotation ---------- */

const Note = styled.p`
  position: absolute;
  left: 22px;
  top: 700px;
  margin: 0;
  color: #ed1c24;
  font: bold 28px/43px "DejaVu Sans Mono", ${jp};
  white-space: pre;
  pointer-events: none;
`;

const Kana = styled.span`
  font: bold 34px/0 ${jp};
`;

/* ---------- input method bar ---------- */

const ImeBar = styled.div`
  position: absolute;
  right: 40px;
  bottom: 40px;
  width: 183px;
  height: 26px;
  display: flex;
  align-items: center;
  gap: 5px;
  padding: 0 5px 0 4px;
  color: #fff;
  font: 16px/24px ${jp};
  background: linear-gradient(#8a8a8a 0%, #aeaeae 10%, #6a6a6a 50%, #4a4a4a 55%, #6e6e6e 100%);
`;

const ImeGrip = styled.span`
  width: 9px;
  height: 17px;
  margin-right: 4px;
  background: radial-gradient(circle, #1c1c1c 1px, transparent 1.3px) 0 0 / 3px 4px;
`;

const ImeMode = styled.button`
  margin-left: ${(p) => (p.$first ? 6 : 0)}px;
`;

const ImeLocks = styled.div`
  margin-left: 4px;
  display: grid;
  font: bold 7px/12px "DejaVu Sans", sans-serif;
`;

const ImeEnd = styled.div`
  margin-left: auto;
  display: grid;
  gap: 7px;
  justify-items: center;
`;

const Dash = styled.span`
  width: 6px;
  height: 2px;
  background: #fff;
`;

/* ---------- taskbar ---------- */

const Taskbar = styled.footer`
  position: relative;
  height: 40px;
  flex: none;
  display: flex;
  align-items: stretch;
  padding: 1px 1px 0 8px;
  border-top: 1px solid #0b2742;
  box-shadow: inset 0 1px 0 rgba(160, 210, 240, 0.6);
  background:
    linear-gradient(rgba(10, 50, 100, 0.35) 0%, rgba(10, 50, 100, 0.1) 60%, transparent 100%),
    linear-gradient(90deg, #1c5a92 0%, #2a7ab4 5%, #3ea8e2 12%, #58bfe6 20%, #46a8dc 24%, #2a7cb8 30%, #2b7fc4 45%, #2472bc 60%, #1e60a8 78%, #14508c 90%, #123f70 100%);
`;

const StartButton = styled.button`
  width: 38px;
  height: 38px;
  margin-right: 14px;
  display: flex;
  align-items: center;
  justify-content: center;
`;

const TaskButton = styled.button`
  width: ${(p) => (p.$stack ? 54 : 58)}px;
  height: 38px;
  margin-right: ${(p) => (p.$stack ? 8 : 4)}px;
  display: flex;
  align-items: center;
  justify-content: center;
  border-radius: 3px;
  ${(p) => !p.$flat && css`
    border: 1px solid rgba(10, 50, 80, 0.8);
    background: linear-gradient(135deg, rgba(255, 255, 255, ${p.$on ? 0.75 : 0.5}), rgba(255, 255, 255, ${p.$on ? 0.35 : 0.12}));
    box-shadow: inset 0 0 0 1px rgba(255, 255, 255, 0.6)${p.$stack ? ", 4px 0 0 -1px rgba(255,255,255,0.35), 5px 0 0 -1px rgba(10,50,80,0.8)" : ""};
  `}
`;

const Tray = styled.div`
  margin-left: auto;
  display: flex;
  align-items: center;
  gap: 8px;
  color: #fff;
`;

const Clock = styled.time`
  width: 80px;
  margin-left: 4px;
  text-align: center;
  font-size: 13px;
  line-height: 18px;
`;

const ShowDesktop = styled.button`
  width: 13px;
  height: 100%;
  margin-left: -3px;
  border: 1px solid #0b2d50;
  box-shadow: inset 0 0 0 1px rgba(200, 225, 245, 0.5);
  background: linear-gradient(160deg, rgba(255, 255, 255, 0.4), rgba(255, 255, 255, 0.1) 45%, rgba(0, 20, 50, 0.25) 50%);
`;

const AppGlyph = styled.span`
  width: 32px;
  height: 32px;
  display: flex;
  align-items: center;
  justify-content: center;
  color: #fff;
  ${(p) => p.$kind === "fz" && css`
    background: #a80c0c;
    border: 1px dashed #f1b0b0;
    font: italic bold 23px/30px "Liberation Sans", sans-serif;
  `}
  ${(p) => p.$kind === "j" && css`
    border-radius: 50% 50% 4px 50%;
    background: radial-gradient(circle at 45% 35%, #8bd833, #46a80c 75%);
    font: bold 27px/30px "Liberation Sans", sans-serif;
  `}
`;

function Bar() {
  return (
    <Taskbar>
      <StartButton aria-label="スタート">
        <svg width="38" height="38" viewBox="0 0 38 38">
          <defs>
            <radialGradient id="orb" cx=".5" cy=".95" r=".95"><stop offset="0" stopColor="#4fe4ff" /><stop offset=".3" stopColor="#1b78b4" /><stop offset=".6" stopColor="#123c66" /><stop offset="1" stopColor="#b4cee4" /></radialGradient>
          </defs>
          <circle cx="19" cy="19" r="17.500" fill="url(#orb)" stroke="#7fb0d4" />
          <path d="M10.500 12c3-1.500 5.500-1.300 8 0l-1.400 6.400c-2.600-1.200-5-1.300-8 0z" fill="#ef6a2e" />
          <path d="M19.600 12.600c3 1.300 5.500 1.200 8.400-.2l-1.600 6.300c-2.900 1.400-5.400 1.400-8.200.2z" fill="#8ac43f" />
          <path d="M8.700 19.700c3-1.300 5.400-1.200 8.100.1l-1.500 6.200c-2.700-1.300-5-1.300-8 .1z" fill="#3f9be8" />
          <path d="M17.900 20.200c2.800 1.200 5.400 1.200 8.200-.2l-1.600 6.300c-2.800 1.400-5.400 1.400-8.100.2z" fill="#fccd35" />
        </svg>
      </StartButton>
      <TaskButton $on $stack aria-label="エクスプローラー">
        <svg width="32" height="30" viewBox="0 0 32 30">
          <path d="M1 3h10l2 2h14v3H1z" fill="#f7ecb0" stroke="#c9ad5a" /><path d="M3 1h5v2H3z" fill="#3aa84a" /><path d="M12 3h4v2h-4z" fill="#c83a2c" /><path d="M20 5h4v2h-4z" fill="#3a8ad0" />
          <path d="M1 7h30v19H1z" fill="#f6e59a" stroke="#d3b75e" /><path d="M2 8h28v4H2z" fill="#fdf5c8" />
          <path d="M5 29v-7c0-4 3-5 6-5h10c4 0 6 1 6 5v7h-4v-6H9v6z" fill="#a9daf2" stroke="#5ea4cc" />
        </svg>
      </TaskButton>
      <TaskButton aria-label="Chrome"><ChromeIcon size={30} /></TaskButton>
      <TaskButton $flat aria-label="FileZilla"><AppGlyph $kind="fz">Fz</AppGlyph></TaskButton>
      <TaskButton aria-label="Jane"><AppGlyph $kind="j">J</AppGlyph></TaskButton>
      <TaskButton $stack aria-label="TeraPad">
        <svg width="32" height="32" viewBox="0 0 32 32" fill="none" strokeLinecap="round">
          <rect x=".5" y=".5" width="31" height="31" fill="#2c34c8" stroke="#c8cef4" />
          <path d="M2 7c4-4 7 2 3 3M3 8c8-5 18-2 26-4M15 5c-1 8-4 17-9 22M22 4c-4 7-7 15-8 23M8 17c4-1 8-1 11-3M27 9c-6 3-9 10-7 15 2 5 9 2 8-3-1-4-6-3-7 1" stroke="#f8f3c8" strokeWidth="2.200" />
        </svg>
      </TaskButton>
      <TaskButton aria-label="Visual Studio">
        <svg width="32" height="32" viewBox="0 0 32 32"><rect width="32" height="32" fill="#06204a" /><path d="M4 12l3-2 7 4.500L22 5l5 2v18l-5 2-8-9.500L7 22l-3-2zM7 14v4l2.500-2zM22 12l-5 4 5 4z" fill="#fff" fillRule="evenodd" /></svg>
      </TaskButton>
      <Tray>
        <Caret $dir="up" $color="#fff" />
        <svg width="16" height="16" viewBox="0 0 16 16"><path d="M1.500 1v14.500" stroke="#fff" strokeWidth="1.800" /><path d="M3 2h5l1 2h6l-2 3 1 3H8L7 8H3z" fill="#fff" /></svg>
        <svg width="16" height="16" viewBox="0 0 16 16" fill="none" stroke="#fff" strokeWidth="1.500"><path d="M5 4h10v8H7M7 15h7M10.500 12v3M1 1v4h4V1M3 5v9" /></svg>
        <svg width="16" height="16" viewBox="0 0 16 16"><path d="M1 5h2.500L7 1v14L3.500 11H1z" fill="#fff" /><path d="M9 5.500q2 2.500 0 5M11.300 4q3 4 0 8M13.500 2.500q4 5.500 0 11" stroke="#fff" fill="none" /></svg>
        <Clock>21:07<br />2014/11/23</Clock>
        <ShowDesktop aria-label="デスクトップの表示" />
      </Tray>
    </Taskbar>
  );
}

export default function App() {
  return (
    <Desktop>
      <Global />
      <Gadget>
        <span>CPU:<b>10%</b></span>
        <span><small>メモリ</small>:<b>64%</b></span>
        <svg width="8" height="8" viewBox="0 0 8 8"><path d="M1 7l6-6M2 1h5v5" stroke="#a9b0ea" strokeWidth="1.400" fill="none" /></svg>
      </Gadget>
      <Studio />
      <Browser />
      <Explorer />
      <Note>
        Masus_Set<Kana>の</Kana> Minus_OverThere<Kana>メソッドは、</Kana>{"\n"}
        a-b=c<Kana>　で</Kana> a<Kana>と</Kana>c<Kana>　が同じ☆</Kana>{"\n"}
        <Kana>働いてないんだぜ☆</Kana>
      </Note>
      <Bar />
      <ImeBar>
        <ImeGrip />
        <svg width="17" height="18" viewBox="0 0 17 18"><circle cx="6.500" cy="6.500" r="5.800" fill="#e01414" /><path d="M12 1h3v8h-3z" fill="#c89a2c" /><path d="M9 12l4-2 3 3-3 4-3-1z" fill="#222" /></svg>
        <ImeMode $first>A</ImeMode>
        <ImeMode>般</ImeMode>
        <svg width="16" height="16" viewBox="0 0 16 16"><path d="M1 8h13l-1.500 7h-10z" fill="#f0b04c" /><path d="M1 2l3-1 6 6-3 2z" fill="#c93a2c" /><path d="M4 1l3 0 4 6-2 1z" fill="#2b4fb8" /><circle cx="12" cy="4" r="3" fill="#a8d4f0" stroke="#4a86b4" /></svg>
        <svg width="17" height="16" viewBox="0 0 17 16"><path d="M1 7l9-4 6 3v5l-9 4-6-3z" fill="#efa63c" /><path d="M1 7l9-4 6 3-9 4z" fill="#f9ce7c" /><path d="M7 10v5" stroke="#a8641a" /></svg>
        <HelpIcon>?</HelpIcon>
        <ImeLocks><span>CAPS</span><span>KANA</span></ImeLocks>
        <ImeEnd><Dash /><Caret $color="#fff" /></ImeEnd>
      </ImeBar>
    </Desktop>
  );
}
